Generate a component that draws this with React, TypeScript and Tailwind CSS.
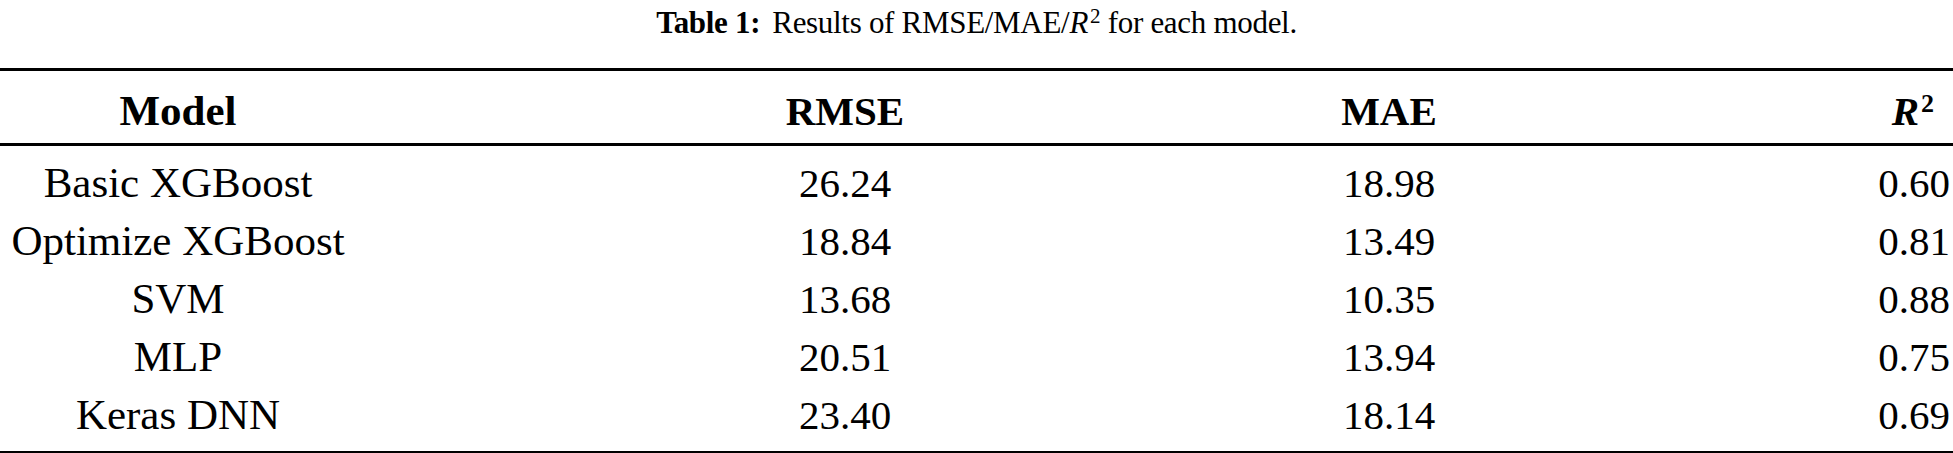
const rows = [
  { model: "Basic XGBoost", rmse: "26.24", mae: "18.98", r2: "0.60" },
  { model: "Optimize XGBoost", rmse: "18.84", mae: "13.49", r2: "0.81" },
  { model: "SVM", rmse: "13.68", mae: "10.35", r2: "0.88" },
  { model: "MLP", rmse: "20.51", mae: "13.94", r2: "0.75" },
  { model: "Keras DNN", rmse: "23.40", mae: "18.14", r2: "0.69" },
];

export default function App() {
  return (
    <div className="w-[1953px] h-[453px] bg-white text-black font-['Liberation_Serif',serif] overflow-hidden">
      {/* Caption */}
      <div className="pt-[1px] text-center text-[31px] leading-[44px] tracking-[-0.3px]">
        <span className="font-bold">Table 1:</span>
        <span className="ml-[12px]">Results of RMSE/MAE/</span>
        <span className="italic">R</span>
        <sup className="text-[21px] ml-[2px]">2</sup>
        <span> for each model.</span>
      </div>

      {/* Table */}
      <div className="mt-[23px] border-t-[3px] border-b-[3px] border-black text-[41px]">
        <div className="grid grid-cols-[356px_978px_110px_1fr] items-baseline pt-[12px] pb-[4px] leading-[56px] font-bold border-b-[3px] border-black">
          <div className="text-center text-[43px]">Model</div>
          <div className="text-center">RMSE</div>
          <div className="text-center">MAE</div>
          <div className="text-right pr-[19px]">
            <span className="italic">R</span>
            <sup className="text-[26px] ml-[2px]">2</sup>
          </div>
        </div>
        <div className="pt-[8px] pb-[7px] leading-[57px]">
          {rows.map((r) => (
            <div key={r.model} className="grid grid-cols-[356px_978px_110px_1fr] items-baseline">
              <div className="text-center text-[43px]">{r.model}</div>
              <div className="text-center">{r.rmse}</div>
              <div className="text-center">{r.mae}</div>
              <div className="text-right pr-[3px]">{r.r2}</div>
            </div>
          ))}
        </div>
      </div>
    </div>
  );
}
